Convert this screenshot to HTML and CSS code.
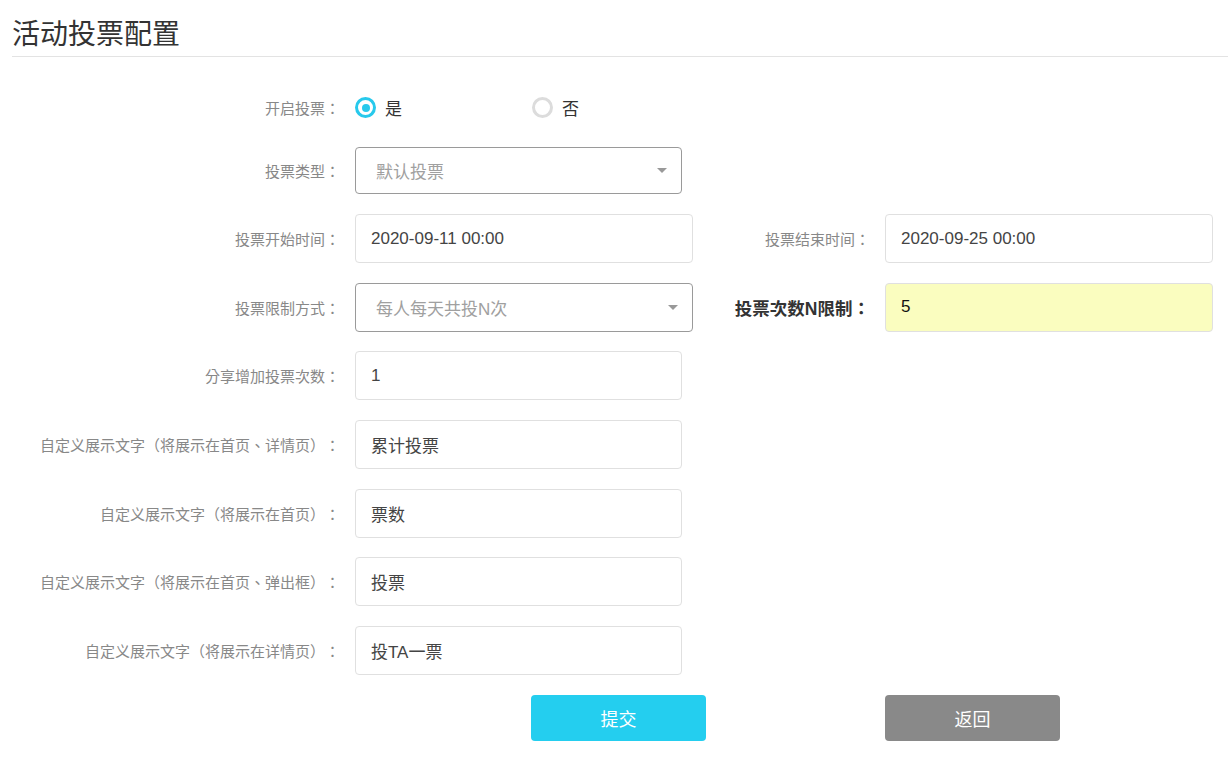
FILE: index.html
```html
<!DOCTYPE html>
<html lang="zh-CN">
<head>
<meta charset="utf-8">
<title>活动投票配置</title>
<link rel="stylesheet" href="styles.css">
</head>
<body>
<div class="page">
  <h1 class="title">活动投票配置</h1>
  <form class="form">
    <div class="row row-radio">
      <label class="label">开启投票：</label>
      <div class="radios">
        <span class="radio-opt"><span class="radio checked"></span><span class="radio-text">是</span></span>
        <span class="radio-opt"><span class="radio"></span><span class="radio-text">否</span></span>
      </div>
    </div>
    <div class="row row-select">
      <label class="label">投票类型：</label>
      <div class="select w327"><span class="placeholder">默认投票</span><span class="caret"></span></div>
    </div>
    <div class="row">
      <label class="label">投票开始时间：</label>
      <div class="input w338">2020-09-11 00:00</div>
      <label class="label label-right">投票结束时间：</label>
      <div class="input w328">2020-09-25 00:00</div>
    </div>
    <div class="row">
      <label class="label">投票限制方式：</label>
      <div class="select w338"><span class="placeholder">每人每天共投N次</span><span class="caret"></span></div>
      <label class="label label-right label-strong">投票次数N限制：</label>
      <div class="input w328 highlight">5</div>
    </div>
    <div class="row">
      <label class="label">分享增加投票次数：</label>
      <div class="input w327">1</div>
    </div>
    <div class="row">
      <label class="label">自定义展示文字（将展示在首页、详情页）：</label>
      <div class="input w327">累计投票</div>
    </div>
    <div class="row">
      <label class="label">自定义展示文字（将展示在首页）：</label>
      <div class="input w327">票数</div>
    </div>
    <div class="row">
      <label class="label">自定义展示文字（将展示在首页、弹出框）：</label>
      <div class="input w327">投票</div>
    </div>
    <div class="row">
      <label class="label">自定义展示文字（将展示在详情页）：</label>
      <div class="input w327">投TA一票</div>
    </div>
    <div class="actions">
      <button type="button" class="btn btn-primary">提交</button>
      <button type="button" class="btn btn-gray">返回</button>
    </div>
  </form>
</div>
</body>
</html>
```
FILE: styles.css
```css
* { box-sizing: border-box; }
html, body { margin: 0; padding: 0; background: #fff; }
body {
  font-family: "Liberation Sans", "Noto Sans CJK SC", sans-serif;
  color: #333;
  text-spacing-trim: space-all;
}
.page { padding-top: 18px; }
.title {
  margin: 0 0 0 12px;
  font-size: 28px;
  font-weight: normal;
  line-height: 34px;
  height: 39px;
  padding-bottom: 4px;
  border-bottom: 1px solid #e3e3e3;
  color: #333;
}
.form { margin-top: 27px; }
.row {
  display: flex;
  align-items: center;
  height: 49px;
  margin-bottom: 19.7px;
}
.row-radio { height: 47px; margin-bottom: 16px; }
.row-select { height: 47px; margin-bottom: 20px; }
.label {
  width: 340px;
  margin-right: 15px;
  text-align: right;
  font-family: "Liberation Sans", "Noto Sans CJK TC", sans-serif;
  font-feature-settings: "locl" 0;
  font-size: 15px;
  color: #888;
  white-space: nowrap;
  flex: none;
  text-spacing-trim: space-all;
}
.label-right { width: 177px; }
.label-strong { font-size: 17.5px; font-weight: bold; color: #333; }
.radios { display: flex; align-items: center; }
.radio-opt { display: flex; align-items: center; width: 177px; }
.radio {
  width: 21px; height: 21px;
  border-radius: 50%;
  border: 3px solid #dcdcdc;
  display: inline-flex;
  align-items: center;
  justify-content: center;
  flex: none;
}
.radio.checked { border-color: #27c9ec; }
.radio.checked::after {
  content: "";
  width: 8px; height: 8px;
  border-radius: 50%;
  background: #27c9ec;
}
.radio-text { margin-left: 9px; font-size: 17px; color: #333; }
.input, .select {
  height: 100%;
  display: flex;
  align-items: center;
  border-radius: 4px;
  font-size: 17px;
  flex: none;
}
.input {
  border: 1px solid #e0e0e0;
  padding-left: 15px;
  color: #444;
}
.select {
  border: 1px solid #9a9a9a;
  padding: 0 14px 0 20px;
  justify-content: space-between;
}
.placeholder { color: #a0a0a0; }
.caret {
  width: 0; height: 0;
  border-left: 5px solid transparent;
  border-right: 5px solid transparent;
  border-top: 5px solid #999;
}
.w327 { width: 327px; }
.w338 { width: 338px; }
.w328 { width: 328px; }
.highlight { background: #fafdbf; color: #111; }
.actions {
  display: flex;
  padding-left: 531px;
  gap: 179px;
  margin-top: 0.3px;
}
.btn {
  width: 175px;
  height: 46px;
  border: 0;
  border-radius: 4px;
  color: #fff;
  font-family: "Liberation Sans", "Noto Sans CJK SC", sans-serif;
  font-size: 18px;
}
.btn-primary { background: #24ceef; }
.btn-gray { background: #898989; }
```
